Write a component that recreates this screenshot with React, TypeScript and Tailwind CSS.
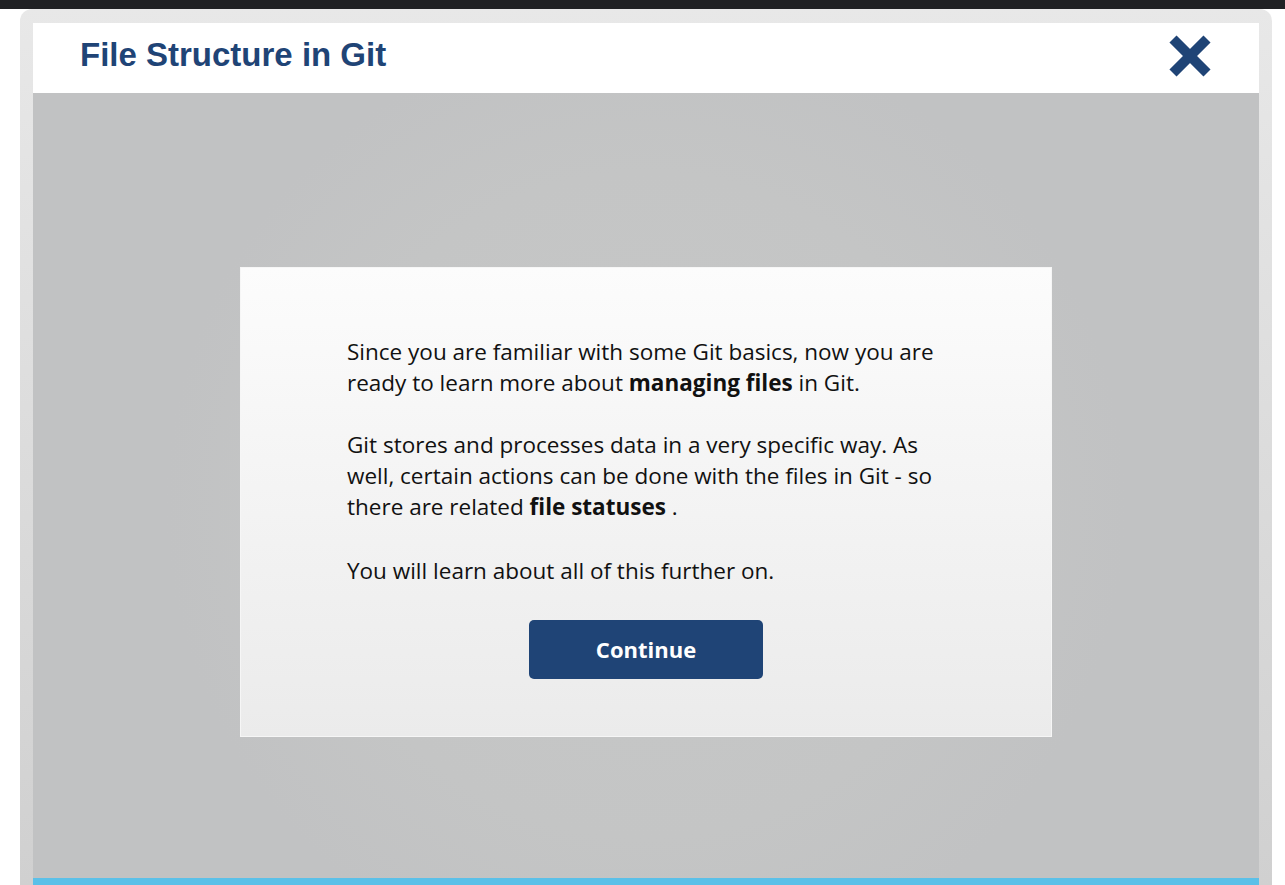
import React from 'react';

const CloseIcon: React.FC = () => (
    <svg width="44" height="44" viewBox="0 0 44 44" aria-hidden="true">
        <g stroke="#1f4476" strokeWidth="10" strokeLinecap="butt">
            <line x1="5" y1="5" x2="39" y2="39" />
            <line x1="39" y1="5" x2="5" y2="39" />
        </g>
    </svg>
);

export default function App() {
    return (
        <div className="w-[1285px] h-[885px] overflow-hidden bg-white flex flex-col">
            <div className="h-[9px] shrink-0 bg-[#202124]" />

            <div className="ml-[20px] w-[1252px] flex-1 rounded-t-[12px] bg-gradient-to-b from-[#e8e8e8] to-[#d0d0d0] px-[13px] pt-[14px] flex flex-col">
                <header className="h-[70px] shrink-0 bg-white flex items-center justify-between pl-[47px] pr-[47px]">
                    <h1 className="text-[33px] font-bold text-[#1f4476] leading-none pb-[7px]" style={{ fontFamily: '"Liberation Sans", Arial, sans-serif' }}>
                        File Structure in Git
                    </h1>
                    <button className="pb-[4px]">
                        <CloseIcon />
                    </button>
                </header>

                <main className="flex-1 flex flex-col bg-[radial-gradient(circle_at_50%_52%,#c7c8c8_0%,#c4c5c5_45%,#c1c2c3_65%)]">
                    <div className="flex-1 flex justify-center pt-[174px]">
                        <div className="w-[812px] h-[470px] self-start bg-gradient-to-b from-[#fcfcfc] to-[#ebebeb] border border-[#f6f6f6] pt-[68px] pl-[106px] pr-[100px] flex flex-col"
                            style={{ fontFamily: '"Open Sans", sans-serif' }}>
                            <div className="text-[22.5px] leading-[31px] text-[#111]">
                                <p>Since you are familiar with some Git basics, now you are ready to learn more about <b>managing files</b> in Git.</p>
                                <p className="mt-[31px]">Git stores and processes data in a very specific way. As well, certain actions can be done with the files in Git - so there are related <b>file statuses</b> .</p>
                                <p className="mt-[33px]">You will learn about all of this further on.</p>
                            </div>
                            <div className="flex justify-center mt-[34px] pr-[6px]">
                                <button className="w-[234px] h-[59px] rounded-[5px] bg-[#1f4476] text-white text-[22px] font-bold">
                                    Continue
                                </button>
                            </div>
                        </div>
                    </div>
                    <div className="h-[7px] shrink-0 bg-[#5bc0e8]" />
                </main>
            </div>
        </div>
    );
}
